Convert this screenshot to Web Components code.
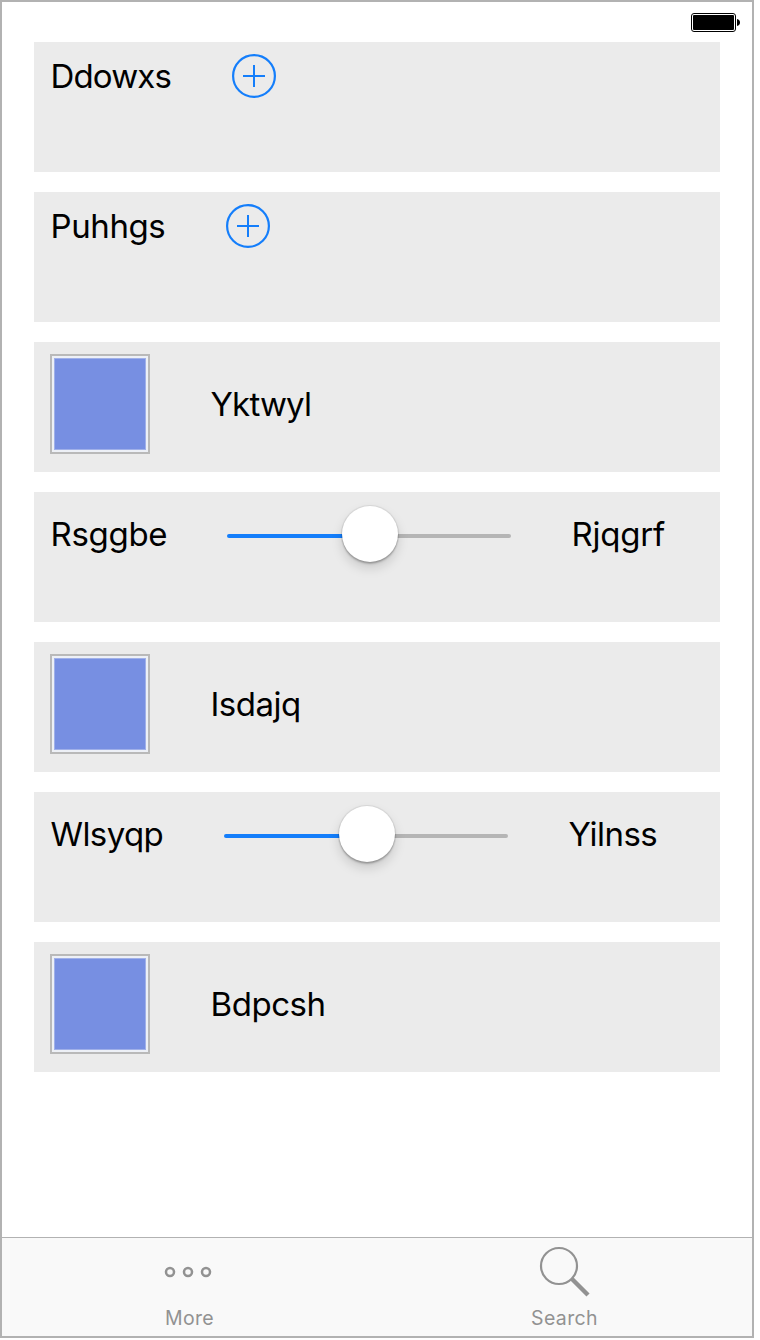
<!DOCTYPE html>
<html lang="en"><head><meta charset="utf-8"><title>Form</title>
<style>
html,body{margin:0;background:#fff}
body{font-family:Inter,"Liberation Sans",sans-serif;color:#000}
</style></head><body>
<app-screen>
  <status-bar slot="status"></status-bar>
  <form-card><text-label w="122" tracking="-.85">Ddowxs</text-label><add-button></add-button></form-card>
  <form-card><text-label w="116" tracking="-.4">Puhhgs</text-label><add-button></add-button></form-card>
  <form-card><color-swatch></color-swatch><text-label w="102" tracking="-.8">Yktwyl</text-label></form-card>
  <form-card><text-label w="117" tracking="-.3">Rsggbe</text-label><value-slider></value-slider><text-label w="94" tracking="-.2">Rjqgrf</text-label></form-card>
  <form-card><color-swatch></color-swatch><text-label w="91" tracking="-.5">Isdajq</text-label></form-card>
  <form-card><text-label w="114" tracking="-.6">Wlsyqp</text-label><value-slider></value-slider><text-label w="90" tracking="-.5">Yilnss</text-label></form-card>
  <form-card><color-swatch></color-swatch><text-label w="116" tracking="-.45">Bdpcsh</text-label></form-card>
  <tab-item slot="tabs" icon="more">More</tab-item>
  <tab-item slot="tabs" icon="search">Search</tab-item>
</app-screen>
<script>
const define = (name, html, init) => customElements.define(name, class extends HTMLElement {
  constructor() {
    super();
    const t = document.createElement('template');
    t.innerHTML = html;
    this.attachShadow({mode: 'open'}).append(t.content.cloneNode(true));
    if (init) init(this);
  }
});

define('app-screen', `<style>
:host{display:flex;flex-direction:column;box-sizing:border-box;width:754px;height:1338px;border:2px solid #b2b2b2;background:#fff}
main{flex:1;display:flex;flex-direction:column;gap:20px;padding:0 32px}
nav{display:grid;grid-template-columns:1fr 1fr;height:98px;border-top:1px solid #b2b2b2;background:#f9f9f9}
</style><slot name="status"></slot><main><slot></slot></main><nav><slot name="tabs"></slot></nav>`);

define('status-bar', `<style>
:host{display:flex;justify-content:flex-end;height:40px;box-sizing:border-box;padding:11px 12px 0 0}
svg{display:block}
</style><svg width="49" height="19" viewBox="0 0 49 19"><rect x=".5" y=".5" width="44" height="18" rx="2.5" fill="#fff" stroke="#000"/><rect x="2" y="2" width="41" height="15" rx="1" fill="#000"/><path d="M46 6c4 .5 4 6.500 0 7z"/></svg>`);

define('form-card', `<style>
:host{display:flex;align-items:flex-start;gap:60px;height:130px;box-sizing:border-box;padding:12px 16px;background:#ebebeb}
</style><slot></slot>`);

define('text-label', `<style>
:host{display:flex;align-items:center;height:44px;box-sizing:border-box;padding-left:.5px;font-size:33px;line-height:40px;white-space:nowrap}
</style><slot></slot>`, el => {
  el.style.width = el.getAttribute('w') + 'px';
  el.style.letterSpacing = el.getAttribute('tracking') + 'px';
  if (el.parentElement.querySelector('color-swatch')) el.style.height = '100px';
  if (el.parentElement.querySelector('value-slider')) el.style.height = '60px';
});

define('add-button', `<style>:host{display:block;width:44px;height:44px}svg{display:block}</style>
<svg width="44" height="44" fill="none" stroke="#147efb" stroke-width="2"><circle cx="22" cy="22" r="20.900" stroke-width="2.200"/><path d="M11 22H33M22 11V33"/></svg>`);

define('color-swatch', `<style>
:host{display:block;box-sizing:border-box;width:100px;height:100px;border:2px solid #b9b9b9;padding:2px;background:#edf0f6}
div{box-sizing:border-box;height:92px;background:#778fe2;border:1px solid #a0b0e9}
</style><div></div>`);

define('value-slider', `<style>
:host{display:grid;align-items:center;width:284px;height:60px}
.track,.thumb{grid-area:1/1}
.track{height:4px;border-radius:2px;margin-top:4px;background:linear-gradient(90deg,#147efb 50%,#b5b5b5 50%)}
.thumb{justify-self:center;width:56px;height:56px;border-radius:50%;background:#fff;margin-left:2px;box-shadow:0 0 1px 1px rgba(0,0,0,.08),0 2px 2px rgba(0,0,0,.22),0 6px 12px rgba(0,0,0,.15)}
</style><div class="track"></div><div class="thumb"></div>`);

const icons = {
  more: '<g stroke-width="2.500"><circle cx="9" cy="34" r="4"/><circle cx="27" cy="34" r="4"/><circle cx="45" cy="34" r="4"/></g>',
  search: '<circle cx="23" cy="28" r="18" stroke-width="2.200"/><path d="M35.500 40.500L52 57" stroke-width="4.500"/>'
};
define('tab-item', `<style>
:host{display:flex;flex-direction:column;align-items:center;color:#929292;font-size:19.500px;line-height:24px;letter-spacing:.35px}
svg{display:block;height:68px}
</style><svg width="58" height="68" fill="none" stroke="#929292"></svg><span><slot></slot></span>`, el => {
  el.shadowRoot.querySelector('svg').innerHTML = icons[el.getAttribute('icon')];
});
</script></body></html>
